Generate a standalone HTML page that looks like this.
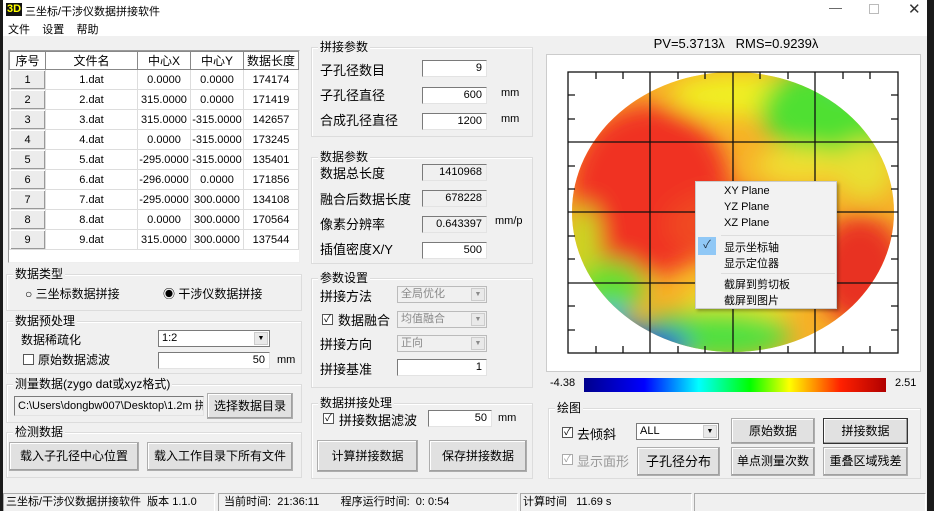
<!DOCTYPE html>
<html><head><meta charset="utf-8"><style>
*{box-sizing:border-box;margin:0;padding:0}
body{width:934px;height:511px;overflow:hidden;background:#1a1a1a;font-family:"Liberation Sans","Noto Sans CJK SC",sans-serif;font-size:12px;color:#000;position:relative}
.a{position:absolute}
#win{left:3px;top:0;width:924px;height:511px;background:#f0f0f0}
.grp{position:absolute;border:1px solid #dcdcdc;box-shadow:inset 1px 1px 0 #fff}
.grp>.t{position:absolute;left:6px;top:-9px;background:#f0f0f0;padding:0 2px;font-size:12px;line-height:16px}
.inp{position:absolute;background:#fff;border:1px solid #7a7a7a;border-right-color:#e3e3e3;border-bottom-color:#e3e3e3;text-align:right;padding-right:4px;font-size:11px;line-height:15px}
.ro{background:#f0f0f0}
.btn{position:absolute;background:#e1e1e1;border:1px solid #adadad;box-shadow:inset -1px -1px 0 #a0a0a0,inset 1px 1px 0 #fff;text-align:center;font-size:12px}
.cb{position:absolute;width:11px;height:11px;border:1px solid #555;background:#fff;font-size:10px;line-height:9px;text-align:center}
.cmb{position:absolute;background:#fff;border:1px solid #7a7a7a;font-size:11px;line-height:15px;padding-left:3px}
.cmb .dd{position:absolute;right:1px;top:1px;width:14px;height:13px;background:#e9e9e9;border:1px solid #ccc;font-size:7px;line-height:12px;text-align:center}
.dis{background:#f0f0f0;color:#8a8a8a;border-color:#bbb}
table{border-collapse:collapse;font-size:11px}
td{border:1px solid #ddd;text-align:center;height:20px;padding:0}
th{font-weight:normal;border:1px solid #888;height:14px;font-size:12px;background:#fff}
td.h{background:#ececec;box-shadow:inset 1px 1px 0 #fff,inset -1px -1px 0 #999}
.sb{position:absolute;top:493px;height:18px;border:1px solid #aaa;border-right-color:#fff;border-bottom:none;font-size:11px;line-height:16px;padding-left:2px}
</style></head><body>
<div id="win" class="a">
<div class="a" style="left:0;top:0;width:924px;height:20px;background:#fff"></div>
<div class="a" style="left:3px;top:3px;font-weight:bold;font-size:11px;background:#111;color:#ff0;line-height:13px;padding:0 1px">3D</div>
<div class="a" style="left:22px;top:3px;font-size:11px">三坐标/干涉仪数据拼接软件</div>
<div class="a" style="left:826px;top:0;font-size:13px;color:#555">—</div>
<div class="a" style="left:866px;top:4px;width:10px;height:10px;border:1px solid #bbb"></div>
<div class="a" style="left:905px;top:0;font-size:15px;color:#333">✕</div>
<div class="a" style="left:0;top:20px;width:924px;height:16px;background:#fff"></div>
<div class="a" style="left:5px;top:21px;font-size:11px">文件&nbsp;&nbsp;&nbsp;&nbsp;设置&nbsp;&nbsp;&nbsp;&nbsp;帮助</div>

<div class="a" style="left:5px;top:50px;width:292px;height:213px;background:#fff;border:1px solid #999;border-right-color:#eee;border-bottom-color:#eee">
<table style="width:290px">
<tr><th style="width:36px">序号</th><th style="width:92px">文件名</th><th style="width:53px">中心X</th><th style="width:53px">中心Y</th><th>数据长度</th></tr>
<tr><td class="h">1</td><td>1.dat</td><td>0.0000</td><td>0.0000</td><td>174174</td></tr>
<tr><td class="h">2</td><td>2.dat</td><td>315.0000</td><td>0.0000</td><td>171419</td></tr>
<tr><td class="h">3</td><td>3.dat</td><td>315.0000</td><td>-315.0000</td><td>142657</td></tr>
<tr><td class="h">4</td><td>4.dat</td><td>0.0000</td><td>-315.0000</td><td>173245</td></tr>
<tr><td class="h">5</td><td>5.dat</td><td>-295.0000</td><td>-315.0000</td><td>135401</td></tr>
<tr><td class="h">6</td><td>6.dat</td><td>-296.0000</td><td>0.0000</td><td>171856</td></tr>
<tr><td class="h">7</td><td>7.dat</td><td>-295.0000</td><td>300.0000</td><td>134108</td></tr>
<tr><td class="h">8</td><td>8.dat</td><td>0.0000</td><td>300.0000</td><td>170564</td></tr>
<tr><td class="h">9</td><td>9.dat</td><td>315.0000</td><td>300.0000</td><td>137544</td></tr>
</table></div>

<div class="grp" style="left:3px;top:274px;width:296px;height:37px"><span class="t">数据类型</span></div>
<div class="a" style="left:22px;top:285px">○ 三坐标数据拼接</div>
<div class="a" style="left:160px;top:285px">◉ 干涉仪数据拼接</div>
<div class="grp" style="left:3px;top:321px;width:296px;height:53px"><span class="t">数据预处理</span></div>
<div class="a" style="left:18px;top:331px">数据稀疏化</div>
<div class="cmb" style="left:155px;top:330px;width:112px;height:17px">1:2<span class="dd">▼</span></div>
<div class="cb" style="left:20px;top:354px"></div><div class="a" style="left:35px;top:351px">原始数据滤波</div>
<div class="inp" style="left:155px;top:352px;width:112px;height:17px">50</div>
<div class="a" style="left:274px;top:354px;font-size:11px">mm</div>
<div class="grp" style="left:3px;top:384px;width:296px;height:39px"><span class="t">测量数据(zygo dat或xyz格式)</span></div>
<div class="inp" style="left:11px;top:396px;width:190px;height:20px;text-align:left;padding-left:3px;line-height:18px;overflow:hidden;white-space:nowrap;background:#f0f0f0">C:\Users\dongbw007\Desktop\1.2m 拼</div>
<div class="btn" style="left:204px;top:393px;width:86px;height:26px;line-height:24px">选择数据目录</div>
<div class="grp" style="left:3px;top:432px;width:296px;height:46px"><span class="t">检测数据</span></div>
<div class="btn" style="left:6px;top:442px;width:130px;height:29px;line-height:27px">载入子孔径中心位置</div>
<div class="btn" style="left:144px;top:442px;width:146px;height:29px;line-height:27px">载入工作目录下所有文件</div>

<div class="grp" style="left:308px;top:47px;width:222px;height:90px"><span class="t">拼接参数</span></div>
<div class="a" style="left:317px;top:60px;font-size:13px">子孔径数目</div>
<div class="inp" style="left:419px;top:60px;width:65px;height:17px">9</div>
<div class="a" style="left:317px;top:85px;font-size:13px">子孔径直径</div>
<div class="inp" style="left:419px;top:87px;width:65px;height:17px">600</div>
<div class="a" style="left:498px;top:87px;font-size:11px">mm</div>
<div class="a" style="left:317px;top:110px;font-size:13px">合成孔径直径</div>
<div class="inp" style="left:419px;top:113px;width:65px;height:17px">1200</div>
<div class="a" style="left:498px;top:113px;font-size:11px">mm</div>
<div class="grp" style="left:308px;top:157px;width:222px;height:107px"><span class="t">数据参数</span></div>
<div class="a" style="left:317px;top:163px;font-size:13px">数据总长度</div>
<div class="inp ro" style="left:419px;top:164px;width:65px;height:17px">1410968</div>
<div class="a" style="left:317px;top:189px;font-size:13px">融合后数据长度</div>
<div class="inp ro" style="left:419px;top:190px;width:65px;height:17px">678228</div>
<div class="a" style="left:317px;top:214px;font-size:13px">像素分辨率</div>
<div class="inp ro" style="left:419px;top:216px;width:65px;height:17px">0.643397</div>
<div class="a" style="left:492px;top:215px;font-size:11px">mm/p</div>
<div class="a" style="left:317px;top:239px;font-size:13px">插值密度X/Y</div>
<div class="inp" style="left:419px;top:242px;width:65px;height:17px">500</div>
<div class="grp" style="left:308px;top:278px;width:222px;height:110px"><span class="t">参数设置</span></div>
<div class="a" style="left:317px;top:286px;font-size:13px">拼接方法</div>
<div class="cmb dis" style="left:394px;top:286px;width:90px;height:17px">全局优化<span class="dd">▼</span></div>
<div class="cb" style="left:319px;top:314px">✓</div><div class="a" style="left:335px;top:310px;font-size:13px">数据融合</div>
<div class="cmb dis" style="left:394px;top:311px;width:90px;height:17px">均值融合<span class="dd">▼</span></div>
<div class="a" style="left:317px;top:334px;font-size:13px">拼接方向</div>
<div class="cmb dis" style="left:394px;top:335px;width:90px;height:17px">正向<span class="dd">▼</span></div>
<div class="a" style="left:317px;top:359px;font-size:13px">拼接基准</div>
<div class="inp" style="left:394px;top:359px;width:90px;height:17px">1</div>
<div class="grp" style="left:308px;top:403px;width:222px;height:76px"><span class="t">数据拼接处理</span></div>
<div class="cb" style="left:320px;top:413px">✓</div><div class="a" style="left:336px;top:410px;font-size:13px">拼接数据滤波</div>
<div class="inp" style="left:425px;top:410px;width:64px;height:17px">50</div>
<div class="a" style="left:495px;top:412px;font-size:11px">mm</div>
<div class="btn" style="left:314px;top:440px;width:101px;height:32px;line-height:30px">计算拼接数据</div>
<div class="btn" style="left:426px;top:440px;width:98px;height:32px;line-height:30px">保存拼接数据</div>

<div class="a" style="left:545px;top:35px;width:376px;text-align:center;font-size:13px;line-height:18px">PV=5.3713λ&nbsp;&nbsp;&nbsp;RMS=0.9239λ</div>
<div class="a" style="left:543px;top:54px;width:375px;height:318px;background:#fff;border:1px solid #ccc"></div>
<svg class="a" style="left:0;top:0" width="934" height="511" viewBox="3 0 934 511">
<defs>
<clipPath id="ec"><ellipse cx="733" cy="212" rx="161" ry="140"/></clipPath>
<filter id="bl" x="-30%" y="-30%" width="160%" height="160%"><feGaussianBlur stdDeviation="12"/></filter>
<linearGradient id="cb" x1="0" x2="1"><stop offset="0" stop-color="#00008c"/><stop offset=".2" stop-color="#0000ff"/><stop offset=".38" stop-color="#00ffff"/><stop offset=".55" stop-color="#00ff00"/><stop offset=".68" stop-color="#ffff00"/><stop offset=".85" stop-color="#ff2000"/><stop offset="1" stop-color="#b00000"/></linearGradient>
</defs>
<g clip-path="url(#ec)">
<rect x="560" y="60" width="350" height="300" fill="#f7b028"/>
<g filter="url(#bl)">
<ellipse cx="740" cy="95" rx="70" ry="22" fill="#f0f020"/>
<ellipse cx="835" cy="110" rx="75" ry="45" fill="#50e030"/>
<ellipse cx="865" cy="170" rx="30" ry="30" fill="#e8e030"/>
<ellipse cx="800" cy="165" rx="45" ry="18" fill="#f0e030"/>
<ellipse cx="650" cy="190" rx="80" ry="85" fill="#f03020"/>
<ellipse cx="730" cy="225" rx="65" ry="35" fill="#f04a20"/>
<ellipse cx="860" cy="270" rx="45" ry="55" fill="#e83020"/>
<ellipse cx="740" cy="300" rx="55" ry="22" fill="#f0e020"/>
<ellipse cx="715" cy="335" rx="75" ry="25" fill="#50e040"/>
<ellipse cx="610" cy="285" rx="35" ry="25" fill="#60e030"/>
<ellipse cx="585" cy="240" rx="14" ry="35" fill="#c0e020"/>
<ellipse cx="640" cy="345" rx="50" ry="16" fill="#1030e0"/>
<ellipse cx="610" cy="318" rx="22" ry="10" fill="#20a0ff"/>
<ellipse cx="860" cy="78" rx="28" ry="9" fill="#20c0e0"/>
</g>
</g>
<g stroke="#111" stroke-width="1.3" fill="none">
<rect x="568" y="72" width="330" height="281"/>
<path d="M650 72V353M733 72V353M815 72V353M568 142H898M568 212H898M568 283H898"/>
<path d="M596 72v7M623 72v7M678 72v7M705 72v7M760 72v7M788 72v7M843 72v7M870 72v7M596 353v-7M623 353v-7M678 353v-7M705 353v-7M760 353v-7M788 353v-7M843 353v-7M870 353v-7M568 95h7M568 119h7M568 166h7M568 189h7M568 236h7M568 259h7M568 306h7M568 330h7M898 95h-7M898 119h-7M898 166h-7M898 189h-7M898 236h-7M898 259h-7M898 306h-7M898 330h-7"/>
</g>
<rect x="584" y="378" width="302" height="14" fill="url(#cb)"/>
</svg>
<div class="a" style="left:547px;top:377px;font-size:11px">-4.38</div>
<div class="a" style="left:892px;top:377px;font-size:11px">2.51</div>
<div class="a" style="left:692px;top:181px;width:142px;height:128px;background:#f2f2f2;border:1px solid #ccc;box-shadow:2px 2px 3px rgba(0,0,0,.3);font-size:11px">
<div class="a" style="left:28px;top:3px">XY Plane</div>
<div class="a" style="left:28px;top:19px">YZ Plane</div>
<div class="a" style="left:28px;top:35px">XZ Plane</div>
<div class="a" style="left:25px;top:53px;width:114px;border-top:1px solid #ddd"></div>
<div class="a" style="left:2px;top:55px;width:18px;height:18px;background:#90c8f6;text-align:center;line-height:17px;color:#234">✓</div>
<div class="a" style="left:28px;top:57px">显示坐标轴</div>
<div class="a" style="left:28px;top:73px">显示定位器</div>
<div class="a" style="left:25px;top:91px;width:114px;border-top:1px solid #ddd"></div>
<div class="a" style="left:28px;top:94px">截屏到剪切板</div>
<div class="a" style="left:28px;top:110px">截屏到图片</div>
</div>
<div class="grp" style="left:545px;top:408px;width:373px;height:71px"><span class="t">绘图</span></div>
<div class="cb" style="left:559px;top:427px">✓</div><div class="a" style="left:574px;top:424px;font-size:13px">去倾斜</div>
<div class="cmb" style="left:633px;top:423px;width:83px;height:17px">ALL<span class="dd">▼</span></div>
<div class="btn" style="left:728px;top:418px;width:84px;height:26px;line-height:24px">原始数据</div>
<div class="btn" style="left:820px;top:418px;width:85px;height:26px;line-height:24px;border-color:#333">拼接数据</div>
<div class="cb" style="left:559px;top:454px;border-color:#aaa;color:#999">✓</div><div class="a" style="left:574px;top:451px;font-size:13px;color:#999">显示面形</div>
<div class="btn" style="left:634px;top:447px;width:83px;height:29px;line-height:27px;font-size:13px">子孔径分布</div>
<div class="btn" style="left:728px;top:447px;width:84px;height:29px;line-height:27px">单点测量次数</div>
<div class="btn" style="left:820px;top:447px;width:85px;height:29px;line-height:27px">重叠区域残差</div>

<div class="a" style="left:0;top:491px;width:924px;height:20px;background:#f0f0f0"></div>
<div class="sb" style="left:0;width:212px">三坐标/干涉仪数据拼接软件&nbsp;&nbsp;版本 1.1.0</div>
<div class="sb" style="left:215px;width:300px">&nbsp;当前时间:&nbsp;&nbsp;21:36:11&nbsp;&nbsp;&nbsp;&nbsp;&nbsp;&nbsp;&nbsp;程序运行时间:&nbsp;&nbsp;0: 0:54</div>
<div class="sb" style="left:517px;width:172px">计算时间&nbsp;&nbsp;&nbsp;11.69 s</div>
<div class="sb" style="left:691px;width:232px"></div>
</div>
</body></html>
